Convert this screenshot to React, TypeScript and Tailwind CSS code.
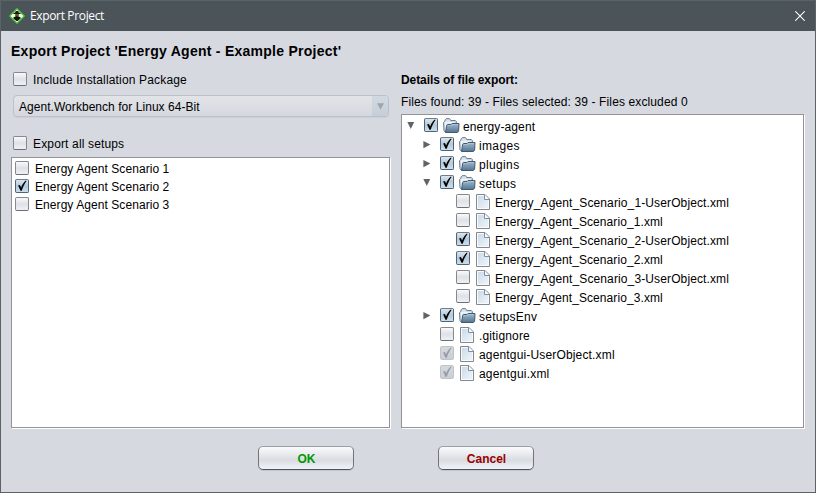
import React from 'react';

type CheckState = 'off' | 'on' | 'disabled';

function Check({ state = 'off' }: { state?: CheckState }) {
  const look =
    state === 'on'
      ? 'border-[#4f6376] border-t-[#6d7e8e] bg-linear-to-b from-[#dbe6ef] via-[#b4c8d8] to-[#c9dff0]'
      : state === 'disabled'
        ? 'border-[#bfc3ca] bg-linear-to-b from-[#d6dade] to-[#c9ced6]'
        : 'border-[#85888e] border-b-[#6b6e74] bg-linear-to-b from-[#fafafb] via-[#dfe1e6] to-[#f0f1f6]';
  return (
    <span className={`block h-[14px] w-[14px] shrink-0 rounded-[2px] border ${look}`}>
      {state !== 'off' && (
        <svg width="12" height="12" viewBox="0 0 12 12" className="block overflow-visible" fill="none">
          <path
            d="M2.1 5.6 L3.9 5 L5.1 7.6 C6.3 4.6 7.9 2.2 9.9 0.6 L10.6 1.1 C8.6 3.8 6.9 7 5.8 10.8 L4.5 10.8 Z"
            fill={state === 'on' ? '#000' : '#969ba3'}
          />
        </svg>
      )}
    </span>
  );
}

function Folder() {
  return (
    <svg width="17" height="16" viewBox="0 0 17 16" className="block shrink-0">
      <defs>
        <linearGradient id="folderFront" x1="0" y1="0" x2="0" y2="1">
          <stop offset="0" stopColor="#a3bace" />
          <stop offset="0.5" stopColor="#7997b0" />
          <stop offset="1" stopColor="#54748f" />
        </linearGradient>
      </defs>
      <path
        d="M2.5 14.5 L1 12.5 L0.6 4.6 L1.6 3.6 L2.4 1.5 L3.2 0.7 H6.4 L7.4 1.5 L7.8 2.6 H12.4 L13.3 3.5 V6"
        fill="#dbe4ec"
        stroke="#5b7389"
      />
      <path d="M2.5 12.5 L2.3 4.8 H11.5" fill="none" stroke="#fff" strokeWidth="0.8" />
      <path d="M2.5 14.5 L3.6 7.4 L4.6 6.5 H8 L9 5.5 H16 L15.6 13.2 L14.4 14.5 Z" fill="url(#folderFront)" stroke="#405a71" />
      <path d="M4.8 7.5 H8.4 L9.4 6.5 H15" fill="none" stroke="#bccddb" strokeWidth="0.6" />
    </svg>
  );
}

function FileIcon() {
  return (
    <svg width="15" height="16" viewBox="0 0 15 16" className="block shrink-0">
      <defs>
        <linearGradient id="paper" x1="0" y1="0" x2="1" y2="1">
          <stop offset="0" stopColor="#cbdbe9" />
          <stop offset="1" stopColor="#eff4f9" />
        </linearGradient>
      </defs>
      <path d="M0.5 0.5 H9 L13.5 5 V15.5 H0.5 Z" fill="#f8fafc" stroke="#85888e" />
      <path d="M2 2 H8 V6 H12 V14 H2 Z" fill="url(#paper)" />
      <path d="M8.5 1 V5.5 H13" fill="#fff" stroke="#7490aa" />
    </svg>
  );
}

function Arrow({ dir }: { dir?: 'down' | 'right' }) {
  return (
    <svg width="8" height="9" viewBox="0 0 8 9" className="mt-[5px] block shrink-0" fill="#606367">
      {dir === 'down' && <path d="M0.3 1 H7.2 L3.8 8 Z" />}
      {dir === 'right' && <path d="M0.4 1 L7.4 4.6 L0.4 8.2 Z" />}
    </svg>
  );
}

function AppLogo() {
  return (
    <svg width="16" height="16" viewBox="0 0 16 16" className="block">
      <path d="M8 0.6 L15.4 8 L8 15.4 L0.6 8 Z" fill="#f9f8d2" stroke="#35c42d" strokeWidth="1.2" />
      <path d="M6.3 4.6 L6.6 3 H9.4 L9.7 4.6 L11.6 5.1 V6 H4.4 V5.1 Z" fill="#1a1a18" />
      <path d="M6.2 6 H9.8 V7.6 L9 8.8 H7 L6.2 7.6 Z" fill="#55543f" />
      <path d="M6.9 8.3 H9.1 L11.6 9.4 V10.6 L8.6 12.9 H7.4 L4.4 10.6 V9.4 Z" fill="#111" />
    </svg>
  );
}

interface Node {
  label: string;
  level: 0 | 1 | 2;
  check: CheckState;
  arrow?: 'down' | 'right';
  tracking: string;
}

const nodes: Node[] = [
  { label: 'energy-agent', level: 0, check: 'on', arrow: 'down', tracking: 'tracking-[0.12px]' },
  { label: 'images', level: 1, check: 'on', arrow: 'right', tracking: 'tracking-[0.35px]' },
  { label: 'plugins', level: 1, check: 'on', arrow: 'right', tracking: 'tracking-[0.35px]' },
  { label: 'setups', level: 1, check: 'on', arrow: 'down', tracking: 'tracking-[0.35px]' },
  { label: 'Energy_Agent_Scenario_1-UserObject.xml', level: 2, check: 'off', tracking: 'tracking-[0.12px]' },
  { label: 'Energy_Agent_Scenario_1.xml', level: 2, check: 'off', tracking: 'tracking-[0.09px]' },
  { label: 'Energy_Agent_Scenario_2-UserObject.xml', level: 2, check: 'on', tracking: 'tracking-[0.12px]' },
  { label: 'Energy_Agent_Scenario_2.xml', level: 2, check: 'on', tracking: 'tracking-[0.09px]' },
  { label: 'Energy_Agent_Scenario_3-UserObject.xml', level: 2, check: 'off', tracking: 'tracking-[0.12px]' },
  { label: 'Energy_Agent_Scenario_3.xml', level: 2, check: 'off', tracking: 'tracking-[0.09px]' },
  { label: 'setupsEnv', level: 1, check: 'on', arrow: 'right', tracking: 'tracking-[0.25px]' },
  { label: '.gitignore', level: 1, check: 'off', tracking: 'tracking-[0.15px]' },
  { label: 'agentgui-UserObject.xml', level: 1, check: 'disabled', tracking: 'tracking-[0.16px]' },
  { label: 'agentgui.xml', level: 1, check: 'disabled', tracking: 'tracking-[0.2px]' },
];

const indent = { 0: 'pl-[5px]', 1: 'pl-[21px]', 2: 'pl-[37px]' };

function TreeRow({ node }: { node: Node }) {
  return (
    <div className={`flex h-[19px] items-start ${indent[node.level]}`}>
      <Arrow dir={node.arrow} />
      <span className="mt-[2px] ml-[9px]">
        <Check state={node.check} />
      </span>
      <span className="mt-[2px] ml-[5px] w-[17px]">
        {node.arrow ? (
          <Folder />
        ) : (
          <span className="block pl-[1px]">
            <FileIcon />
          </span>
        )}
      </span>
      <span className={`mt-[4px] ml-[3px] ${node.tracking}`}>{node.label}</span>
    </div>
  );
}

const scenarios: { label: string; check: CheckState }[] = [
  { label: 'Energy Agent Scenario 1', check: 'off' },
  { label: 'Energy Agent Scenario 2', check: 'on' },
  { label: 'Energy Agent Scenario 3', check: 'off' },
];

function DialogButton({ color, children }: { color: string; children: React.ReactNode }) {
  return (
    <button
      className={`h-[24px] w-[96px] rounded-[5px] border border-[#707378] border-t-[#9b9ea3] border-b-[#505359] bg-linear-to-b from-[#fbfbfc] via-[#d9dce1] via-60% to-[#f1f3fb] pt-[2px] pl-[1px] font-bold shadow-[0_1px_0_#c2c5cd] ${color}`}
    >
      {children}
    </button>
  );
}

export default function App() {
  return (
    <div className="flex h-[493px] w-[816px] flex-col overflow-hidden border border-[#5b6369] bg-[#d6d9e0] font-['Liberation_Sans',Arial,sans-serif] text-[12px] leading-[14px] whitespace-nowrap text-black">
      <header className="flex h-[30px] shrink-0 items-center bg-[#4b5459] pl-[8px] text-white">
        <AppLogo />
        <span className="ml-[5px] font-['Open_Sans','Noto_Sans',sans-serif] text-[12px] tracking-[-0.35px]">
          Export Project
        </span>
        <svg width="10" height="10" viewBox="0 0 10 10" className="mr-[10px] ml-auto block" stroke="#fff" strokeWidth="1.1">
          <path d="M0.3 0.3 L9.7 9.7 M9.7 0.3 L0.3 9.7" />
        </svg>
      </header>

      <main className="flex flex-col px-[10px]">
        <h1 className="mt-[12px] h-[16px] text-[14px] leading-[16px] font-bold tracking-[0.26px]">
          Export Project 'Energy Agent - Example Project'
        </h1>

        <div className="flex h-[370px] gap-[10px]">
          <section className="flex w-[380px] flex-col">
            <label className="mt-[13px] flex h-[14px] items-center pl-[2px]">
              <Check />
              <span className="ml-[6px] pt-[2px] tracking-[0.16px]">Include Installation Package</span>
            </label>
            <div className="mt-[9px] ml-[2px] flex h-[22px] w-[376px] items-stretch overflow-hidden rounded-[4px] border border-[#bcc0c8] bg-linear-to-b from-[#e2e4e7] to-[#d5d8df] shadow-[0_1px_0_#ccd0d7]">
              <span className="flex-1 pt-[4px] pl-[5px] tracking-[0.045px]">Agent.Workbench for Linux 64-Bit</span>
              <span className="flex w-[16px] items-center justify-center bg-linear-to-b from-[#d2d9e1] to-[#c5ced8]">
                <svg width="7" height="7" viewBox="0 0 7 7" fill="#9fa5ac">
                  <path d="M0 0.3 H7 L3.5 6.7 Z" />
                </svg>
              </span>
            </div>
            <label className="mt-[19px] flex h-[14px] items-center pl-[2px]">
              <Check />
              <span className="ml-[6px] pt-[2px] tracking-[0.15px]">Export all setups</span>
            </label>
            <div className="mt-[7px] h-[271px] w-[379px] border border-[#929499] bg-white pt-[1px] pl-[3px] shadow-[1px_1px_0_#fff]">
              {scenarios.map((s) => (
                <div key={s.label} className="flex h-[18px] items-center">
                  <Check state={s.check} />
                  <span className="ml-[6px] pt-[2px] tracking-[0.07px]">{s.label}</span>
                </div>
              ))}
            </div>
          </section>

          <section className="flex w-[403px] flex-col">
            <h2 className="mt-[14px] font-bold tracking-[-0.08px]">Details of file export:</h2>
            <p className="mt-[8px] tracking-[0.12px]">Files found: 39 - Files selected: 39 - Files excluded 0</p>
            <div className="mt-[5px] h-[314px] w-[403px] border border-[#929499] bg-white pt-[1px] shadow-[1px_1px_0_#fff]">
              {nodes.map((n) => (
                <TreeRow key={n.label} node={n} />
              ))}
            </div>
          </section>
        </div>

        <footer className="mt-[17px] flex justify-start gap-[84px] pl-[247px]">
          <DialogButton color="text-[#009900]">OK</DialogButton>
          <DialogButton color="text-[#990000]">Cancel</DialogButton>
        </footer>
      </main>
    </div>
  );
}
